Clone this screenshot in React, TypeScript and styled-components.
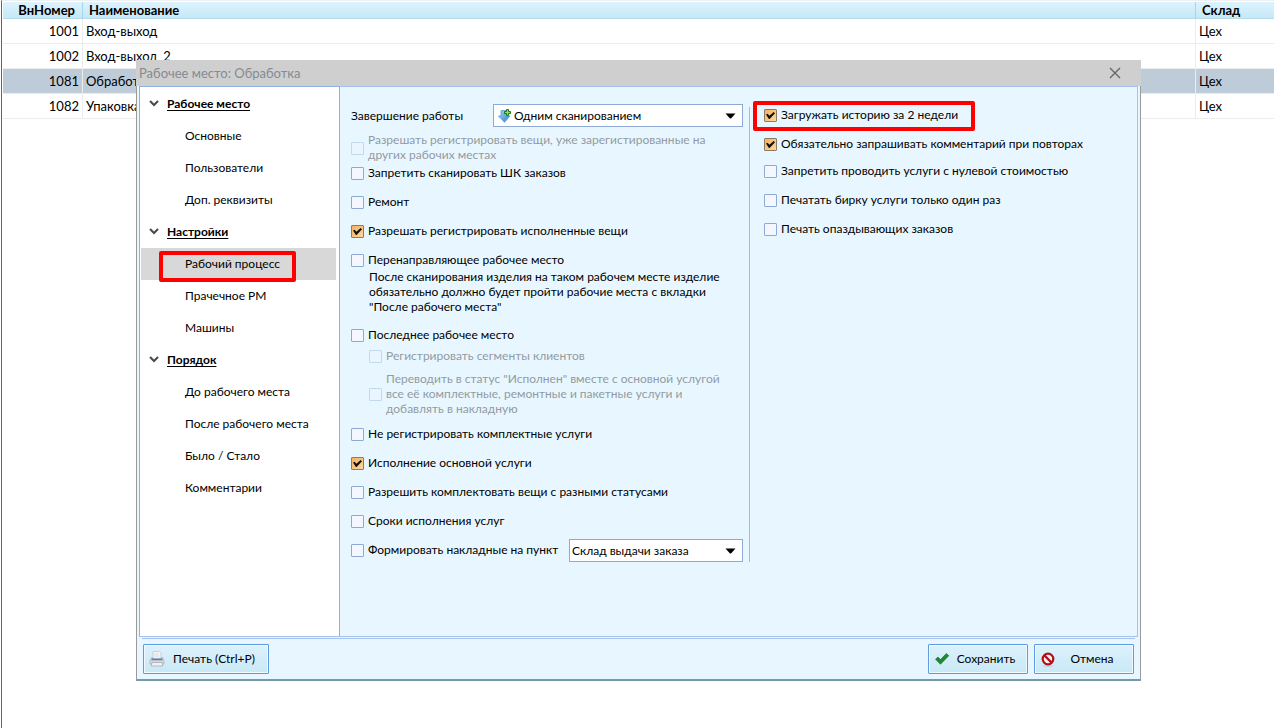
import React from "react";
import styled, { createGlobalStyle } from "styled-components";

const GlobalStyle = createGlobalStyle`
  *, *::before, *::after { box-sizing: border-box; }
  body {
    margin: 0;
    background: #ffffff;
    color: #000000;
    font: 12px/15px Lato, "Open Sans", sans-serif;
  }
  button, select, input { font: inherit; color: inherit; margin: 0; }
`;

const Page = styled.div`
  position: relative;
  min-height: 100vh;
  padding-left: 1px;
`;

const Workspace = styled.main`
  min-height: 100vh;
  padding: 1px 0 0 1px;
  border-left: 1px solid #44699c;
  border-top: 1px solid #efefef;
`;

const Grid = styled.table`
  width: 100%;
  table-layout: fixed;
  border-collapse: separate;
  border-spacing: 0;
  font-size: 13px;
`;

const HeadCell = styled.th<{ $align?: string; $width?: number }>`
  width: ${(p) => (p.$width ? `${p.$width}px` : "auto")};
  height: 17px;
  padding: 0 7px 0 6px;
  text-align: ${(p) => p.$align ?? "left"};
  font-weight: 700;
  line-height: 16px;
  background: linear-gradient(#dcf3ff, #c6e8f7);
  border-right: 1px solid #a8d5e8;
  border-bottom: 1px solid #b4dcec;
  &:last-child { border-right: 0; }
`;

const Cell = styled.td<{ $align?: string }>`
  height: 25px;
  padding: 0 3px;
  text-align: ${(p) => p.$align ?? "left"};
  border-right: 1px solid #ececec;
  border-bottom: 1px solid #ececec;
  &:last-child { border-right: 0; }
`;

const GridRow = styled.tr<{ $selected?: boolean }>`
  background: ${(p) => (p.$selected ? "#becbd9" : "#ffffff")};
`;

const Overlay = styled.div`
  position: absolute;
  inset: 0;
  padding: 60px 133px 0 136px;
`;

const Dialog = styled.section`
  display: flex;
  flex-direction: column;
  background: #e8f7ff;
`;

const TitleBar = styled.header`
  display: flex;
  align-items: center;
  justify-content: space-between;
  height: 26px;
  padding: 0 20px 1px 3px;
  background: #cfcfcf;
`;

const Title = styled.h1`
  margin: 0;
  font-size: 13px;
  line-height: 18px;
  font-weight: 400;
  color: #848b93;
`;

const CloseButton = styled.button`
  display: flex;
  padding: 0;
  border: 0;
  background: none;
`;

const DialogBody = styled.div`
  padding: 0 2px 5px;
  border-left: 1px solid #9a9a9a;
  border-right: 1px solid #9a9a9a;
  border-bottom: 2px solid #729cae;
`;

const Panels = styled.div`
  display: flex;
  min-height: 551px;
  border-bottom: 1px solid #a6c2ee;
`;

const Sidebar = styled.nav`
  flex: 0 0 201px;
  padding: 1px;
  background: #ffffff;
  border: 1px solid #8fb0e0;
  border-bottom: 0;
`;

const SideHeading = styled.button`
  display: flex;
  align-items: center;
  gap: 8px;
  width: 100%;
  height: 32px;
  padding: 0 8px 1px;
  border: 0;
  background: none;
  font-weight: 700;
  text-decoration: underline;
  text-underline-offset: 2px;
`;

const SideItem = styled.button<{ $active?: boolean }>`
  position: relative;
  display: block;
  width: 195px;
  height: 32px;
  padding: 0 0 2px 44px;
  border: 0;
  text-align: left;
  background: ${(p) => (p.$active ? "#d8d8d8" : "none")};
`;

const Highlight = styled.span<{ $top: number; $left: number; $width: number; $height: number }>`
  position: absolute;
  top: ${(p) => p.$top}px;
  left: ${(p) => p.$left}px;
  width: ${(p) => p.$width}px;
  height: ${(p) => p.$height}px;
  border: 4px solid #ff0000;
  border-radius: 2px;
  pointer-events: none;
`;

const Content = styled.div`
  flex: 1;
  display: flex;
  align-items: flex-start;
  padding: 17px 0 0 11px;
  border-top: 1px solid #a6c2ee;
  border-right: 1px solid #a6c2ee;
`;

const LeftColumn = styled.div`
  flex: 0 0 392px;
`;

const Divider = styled.div`
  align-self: flex-start;
  width: 1px;
  height: 455px;
  margin: 3px 14px 0 6px;
  background: #a6b9e4;
`;

const RightColumn = styled.div`
  flex: 1;
  padding-top: 4px;
`;

const FieldRow = styled.div`
  display: flex;
  align-items: center;
  justify-content: space-between;
`;

const OptionBox = styled.div<{ $gap?: number; $indent?: boolean }>`
  position: relative;
  display: flex;
  margin-top: ${(p) => p.$gap ?? 14}px;
  padding-left: ${(p) => (p.$indent ? 18 : 0)}px;
`;

const OptionLabel = styled.label<{ $disabled?: boolean }>`
  display: flex;
  align-items: center;
  gap: 4px;
  white-space: nowrap;
  color: ${(p) => (p.$disabled ? "#929aa2" : "#000000")};
`;

const OptionText = styled.span`
  margin: -1px 0 1px;
`;

const Check = styled.input`
  appearance: none;
  flex: none;
  display: grid;
  place-items: center;
  width: 13px;
  height: 13px;
  border: 1px solid #8ea9d6;
  border-radius: 1px;
  background: #f4f7ff;
  &:disabled {
    border-color: #c5d9ec;
    background: #eaf6ff;
  }
  &:checked {
    border-color: #8c7a62;
    background: linear-gradient(135deg, #f3b163, #ffd898);
  }
  &:checked::after {
    content: "";
    width: 9px;
    height: 7px;
    background: #111111;
    clip-path: polygon(0 35%, 18% 25%, 38% 52%, 85% 0, 100% 18%, 40% 100%, 32% 100%);
  }
`;

const Hint = styled.p`
  margin: 1px 0 0 18px;
  white-space: nowrap;
`;

const SelectBox = styled.div<{ $width: number }>`
  display: flex;
  align-items: center;
  gap: 1px;
  width: ${(p) => p.$width}px;
  height: 23px;
  padding: 0 6px 0 2px;
  border: 1px solid #8ea9d6;
  background: #ffffff;
  > svg { flex: none; pointer-events: none; }
`;

const Select = styled.select`
  appearance: none;
  flex: 1;
  min-width: 0;
  height: 21px;
  padding: 0;
  border: 0;
  background: transparent;
`;

const Footer = styled.footer`
  display: flex;
  gap: 6px;
  margin: 1px 3px 0;
  padding: 5px 1px 0;
  border-top: 1px solid #a6c2ee;
`;

const Spacer = styled.div`
  flex: 1;
`;

const ActionButton = styled.button<{ $width: number }>`
  display: flex;
  align-items: center;
  width: ${(p) => p.$width}px;
  height: 30px;
  padding: 0 5px;
  border: 1px solid #5e9be0;
  border-radius: 1px;
  background: linear-gradient(#dcf2fc, #c9e8f6);
  box-shadow: inset 0 0 0 1px #eefaff;
`;

const ActionText = styled.span`
  flex: 1;
  padding-bottom: 2px;
  text-align: center;
`;

const Caret = () => (
  <svg width="11" height="6" viewBox="0 0 11 6" aria-hidden="true">
    <path d="M0.5 0.5h10L6 5.5H5z" fill="#000" />
  </svg>
);

const Chevron = () => (
  <svg width="10" height="7" viewBox="0 0 10 7" aria-hidden="true">
    <path d="M1 1l4 4 4-4" fill="none" stroke="#4a4a4a" strokeWidth="2" />
  </svg>
);

const CloseIcon = () => (
  <svg width="12" height="12" viewBox="0 0 12 12" aria-hidden="true">
    <path d="M1 1l10 10M11 1L1 11" fill="none" stroke="#666" strokeWidth="1.4" />
  </svg>
);

const ScanIcon = () => (
  <svg width="17" height="16" viewBox="0 0 17 16" aria-hidden="true">
    <defs>
      <linearGradient id="scanArrow" x1="0" y1="0" x2="1" y2="1">
        <stop offset="0" stopColor="#a9d4f4" />
        <stop offset="1" stopColor="#2f7fcc" />
      </linearGradient>
    </defs>
    <path d="M5 2.500h6v5.500h3L8.500 14.300 2.500 8H5z" fill="url(#scanArrow)" stroke="#5c9ad6" strokeWidth="0.8" />
    <path d="M10.500 1.500h2v2h2v2h-2v2h-2v-2h-2v-2h2z" fill="#8ee05a" stroke="#157a14" strokeWidth="1" />
  </svg>
);

const PrinterIcon = () => (
  <svg width="16" height="18" viewBox="0 0 16 18" aria-hidden="true">
    <path d="M4 1.500h6.500L12 3V9H4z" fill="#f4f4f4" stroke="#c8c8c8" strokeWidth="0.8" />
    <path d="M5.500 4h4M5.500 6h5" stroke="#d5d5d5" strokeWidth="0.8" />
    <path d="M2.500 7.500h1V9h9V7.500h1l1.500 3V14H1v-3.500z" fill="#d6d7da" stroke="#a6a8ac" strokeWidth="0.6" />
    <rect x="2.500" y="8.500" width="11" height="1.800" fill="#5c83c0" />
    <path d="M3 12.500h10l.8 3.500H2.200z" fill="#f0f0f0" stroke="#a5a5a5" strokeWidth="0.7" />
  </svg>
);

const SaveIcon = () => (
  <svg width="16" height="14" viewBox="0 0 16 14" aria-hidden="true">
    <path d="M1.500 7.300L4 5l2.500 2.600L12.300 1.500l2.500 2.200L6.500 12.300z" fill="#1d8a30" stroke="#14702a" strokeWidth="0.6" />
  </svg>
);

const CancelIcon = () => (
  <svg width="16" height="16" viewBox="0 0 16 16" aria-hidden="true">
    <ellipse cx="8" cy="15" rx="5.500" ry="0.800" fill="#b9cdd8" />
    <circle cx="8" cy="8" r="5.300" fill="#f7f3f5" stroke="#b31019" strokeWidth="2.200" />
    <path d="M4.400 4.400l7.200 7.200" stroke="#b31019" strokeWidth="2.200" />
  </svg>
);

type OptionProps = {
  children: React.ReactNode;
  checked?: boolean;
  disabled?: boolean;
  indent?: boolean;
  gap?: number;
  extra?: React.ReactNode;
};

const Option = ({ children, checked, disabled, indent, gap, extra }: OptionProps) => (
  <OptionBox $gap={gap} $indent={indent}>
    <OptionLabel $disabled={disabled}>
      <Check type="checkbox" defaultChecked={checked} disabled={disabled} />
      <OptionText>{children}</OptionText>
    </OptionLabel>
    {extra}
  </OptionBox>
);

const places = [
  { id: 1001, name: "Вход-выход" },
  { id: 1002, name: "Вход-выход_2" },
  { id: 1081, name: "Обработка", selected: true },
  { id: 1082, name: "Упаковка" },
];

const sections = [
  { title: "Рабочее место", items: ["Основные", "Пользователи", "Доп. реквизиты"] },
  { title: "Настройки", items: ["Рабочий процесс", "Прачечное РМ", "Машины"] },
  {
    title: "Порядок",
    items: ["До рабочего места", "После рабочего места", "Было / Стало", "Комментарии"],
  },
];

export default function App() {
  return (
    <Page>
      <GlobalStyle />
      <Workspace>
        <Grid>
          <thead>
            <tr>
              <HeadCell $align="right" $width={80}>ВнНомер</HeadCell>
              <HeadCell>Наименование</HeadCell>
              <HeadCell $width={78}>Склад</HeadCell>
            </tr>
          </thead>
          <tbody>
            {places.map((p) => (
              <GridRow key={p.id} $selected={p.selected}>
                <Cell $align="right">{p.id}</Cell>
                <Cell>{p.name}</Cell>
                <Cell>Цех</Cell>
              </GridRow>
            ))}
          </tbody>
        </Grid>
      </Workspace>

      <Overlay>
        <Dialog role="dialog" aria-labelledby="dialog-title">
          <TitleBar>
            <Title id="dialog-title">Рабочее место: Обработка</Title>
            <CloseButton type="button" aria-label="Закрыть"><CloseIcon /></CloseButton>
          </TitleBar>
          <DialogBody>
            <Panels>
              <Sidebar>
                {sections.map((s) => (
                  <React.Fragment key={s.title}>
                    <SideHeading type="button"><Chevron />{s.title}</SideHeading>
                    {s.items.map((item) => {
                      const active = item === "Рабочий процесс";
                      return (
                        <SideItem key={item} type="button" $active={active}>
                          {item}
                          {active && <Highlight $top={3} $left={18} $width={137} $height={31} />}
                        </SideItem>
                      );
                    })}
                  </React.Fragment>
                ))}
              </Sidebar>
              <Content>
                <LeftColumn>
                  <FieldRow>
                    <label htmlFor="finish">Завершение работы</label>
                    <SelectBox $width={250}>
                      <ScanIcon />
                      <Select id="finish"><option>Одним сканированием</option></Select>
                      <Caret />
                    </SelectBox>
                  </FieldRow>
                  <Option disabled gap={6}>
                    Разрешать регистрировать вещи, уже зарегистированные на<br />других рабочих местах
                  </Option>
                  <Option gap={3}>Запретить сканировать ШК заказов</Option>
                  <Option>Ремонт</Option>
                  <Option checked>Разрешать регистрировать исполненные вещи</Option>
                  <Option>Перенаправляющее рабочее место</Option>
                  <Hint>
                    После сканирования изделия на таком рабочем месте изделие<br />
                    обязательно должно будет пройти рабочие места с вкладки<br />
                    "После рабочего места"
                  </Hint>
                  <Option>Последнее рабочее место</Option>
                  <Option disabled indent gap={6}>Регистрировать сегменты клиентов</Option>
                  <Option disabled indent gap={8}>
                    Переводить в статус "Исполнен" вместе с основной услугой<br />
                    все её комплектные, ремонтные и пакетные услуги и<br />
                    добавлять в накладную
                  </Option>
                  <Option gap={10}>Не регистрировать комплектные услуги</Option>
                  <Option checked>Исполнение основной услуги</Option>
                  <Option>Разрешить комплектовать вещи с разными статусами</Option>
                  <Option>Сроки исполнения услуг</Option>
                  <Option
                    gap={10}
                    extra={
                      <>
                        <Spacer />
                        <SelectBox $width={174}>
                          <Select aria-label="Пункт"><option>Склад выдачи заказа</option></Select>
                          <Caret />
                        </SelectBox>
                      </>
                    }
                  >
                    Формировать накладные на пункт
                  </Option>
                </LeftColumn>
                <Divider />
                <RightColumn>
                  <Option
                    checked
                    gap={0}
                    extra={<Highlight $top={-7} $left={-11} $width={222} $height={30} />}
                  >
                    Загружать историю за 2 недели
                  </Option>
                  <Option checked>Обязательно запрашивать комментарий при повторах</Option>
                  <Option gap={12}>Запретить проводить услуги с нулевой стоимостью</Option>
                  <Option>Печатать бирку услуги только один раз</Option>
                  <Option>Печать опаздывающих заказов</Option>
                </RightColumn>
              </Content>
            </Panels>
            <Footer>
              <ActionButton type="button" $width={126}>
                <PrinterIcon />
                <ActionText>Печать (Ctrl+P)</ActionText>
              </ActionButton>
              <Spacer />
              <ActionButton type="button" $width={100}>
                <SaveIcon />
                <ActionText>Сохранить</ActionText>
              </ActionButton>
              <ActionButton type="button" $width={100}>
                <CancelIcon />
                <ActionText>Отмена</ActionText>
              </ActionButton>
            </Footer>
          </DialogBody>
        </Dialog>
      </Overlay>
    </Page>
  );
}
